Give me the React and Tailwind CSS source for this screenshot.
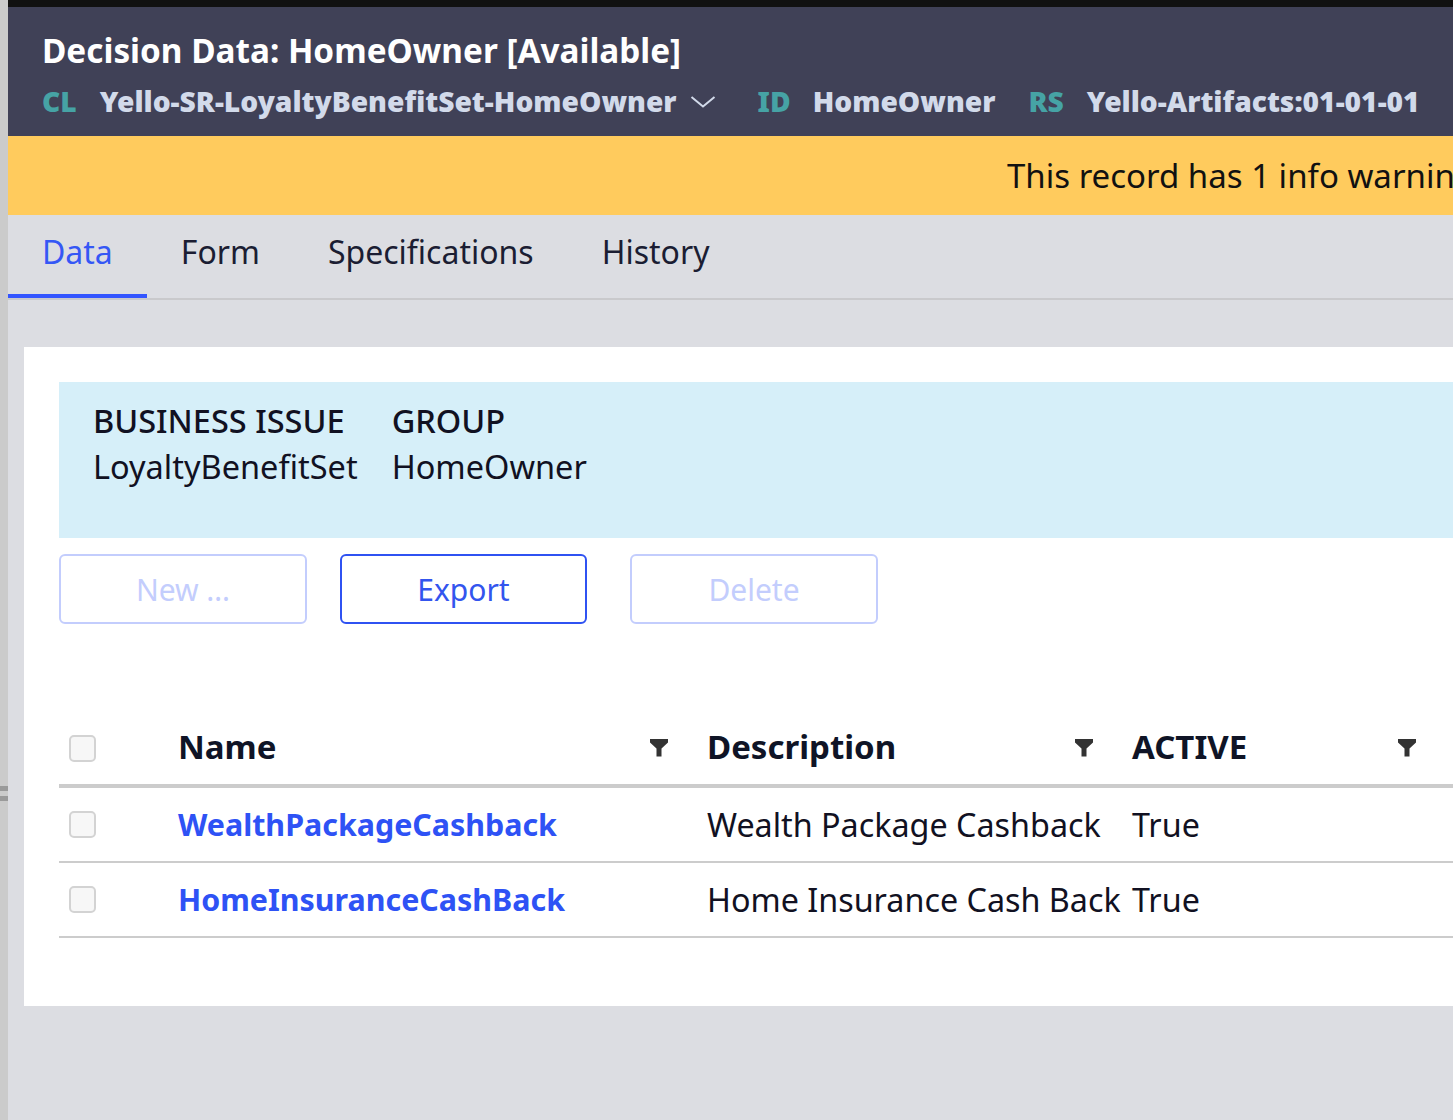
import React from "react";

const Funnel = () => (
  <svg width="18" height="18" viewBox="0 0 18 18" className="shrink-0">
    <path d="M0 0H18V3.5L11.5 9.5V17.5H6.5V9.5L0 3.5Z" fill="#333333" />
  </svg>
);

const Checkbox = () => (
  <div className="w-[27px] h-[27px] rounded-[5px] border-2 border-[#d3d3d3] bg-[#f7f7f7]" />
);

const rows = [
  { name: "WealthPackageCashback", desc: "Wealth Package Cashback", active: "True" },
  { name: "HomeInsuranceCashBack", desc: "Home Insurance Cash Back", active: "True" },
];

const App = () => {
  return (
    <div className="flex w-[1453px] h-[1120px] overflow-hidden font-['Noto_Sans','Open_Sans',sans-serif]">
      {/* left strip */}
      <div className="w-[8px] shrink-0 bg-[#cbcbcb] flex flex-col pt-[786px] gap-[5px]">
        <div className="h-[5px] bg-[#9a9a9a]" />
        <div className="h-[5px] bg-[#9a9a9a]" />
      </div>

      <div className="flex-1 min-w-0 flex flex-col bg-[#dcdde2]">
        <div className="h-[7px] bg-[#111111]" />

        {/* Header */}
        <div className="h-[129px] bg-[#404157] pl-[34px] pt-[23px] overflow-hidden">
          <h1 className="text-[33.3px] leading-[40px] font-bold text-white whitespace-nowrap">
            Decision Data: HomeOwner [Available]
          </h1>
          <div className="mt-[15px] flex items-center text-[28.2px] leading-[32px] font-black whitespace-nowrap">
            <span className="shrink-0 text-[#46a3a5]">CL</span>
            <span className="shrink-0 ml-[23px] text-[#d2daea]">Yello-SR-LoyaltyBenefitSet-HomeOwner</span>
            <svg width="26" height="14" viewBox="0 0 26 14" className="shrink-0 ml-[13px] mt-[2px]">
              <path d="M1.5 2L13 11.5L24.5 2" fill="none" stroke="#d2daea" strokeWidth="2" />
            </svg>
            <span className="shrink-0 ml-[42px] text-[#46a3a5]">ID</span>
            <span className="shrink-0 ml-[22px] text-[#d2daea]">HomeOwner</span>
            <span className="shrink-0 ml-[33px] text-[#46a3a5]">RS</span>
            <span className="shrink-0 ml-[23px] text-[#d2daea]">Yello-Artifacts:01-01-01</span>
          </div>
        </div>

        {/* Warning banner */}
        <div className="h-[79px] bg-[#ffcb5d] flex items-center pl-[999px] overflow-hidden whitespace-nowrap">
          <span className="text-[33px] text-[#111111]">This record has 1 info warning</span>
        </div>

        {/* Tabs */}
        <div className="h-[85px] flex border-b-2 border-[#c9c9cc]">
          {["Data", "Form", "Specifications", "History"].map((t, i) => (
            <div
              key={t}
              className={`px-[34px] flex items-center text-[32px] border-b-4 ${
                i === 0 ? "text-[#3557f5] border-[#3355ff]" : "text-[#1b1d33] border-transparent"
              }`}
            >
              <span className="-mt-[6px]">{t}</span>
            </div>
          ))}
        </div>

        {/* Card */}
        <div className="ml-[16px] mt-[47px] bg-white pl-[35px] pt-[35px] pb-[68px]">
          <div className="h-[156px] bg-[#d6eff9] pl-[34px] pt-[16px] flex gap-[34px] text-[32.5px] leading-[46px] text-[#111122]">
            <div>
              <div className="font-medium">BUSINESS ISSUE</div>
              <div>LoyaltyBenefitSet</div>
            </div>
            <div>
              <div className="font-medium">GROUP</div>
              <div>HomeOwner</div>
            </div>
          </div>

          <div className="mt-[16px] flex text-[30px]">
            <div className="w-[248px] h-[70px] rounded-[6px] border-2 border-[#c3cdfd] text-[#c3cdfd] flex items-center justify-center">
              New …
            </div>
            <div className="ml-[33px] w-[247px] h-[70px] rounded-[6px] border-2 border-[#2f52f2] text-[#3355ee] flex items-center justify-center">
              Export
            </div>
            <div className="ml-[43px] w-[248px] h-[70px] rounded-[6px] border-2 border-[#c3cdfd] text-[#c3cdfd] flex items-center justify-center">
              Delete
            </div>
          </div>

          {/* Table */}
          <div className="mt-[88px] w-[1396px]">
            <div className="grid grid-cols-[119px_529px_425px_323px] h-[76px] border-b-4 border-[#cccccc] items-center text-[33px] font-bold text-[#0f1426]">
              <div className="pl-[10px]">
                <Checkbox />
              </div>
              <div className="flex items-center justify-between pr-[39px]">
                <span className="-mt-[2px]">Name</span>
                <Funnel />
              </div>
              <div className="flex items-center justify-between pr-[39px]">
                <span className="-mt-[2px]">Description</span>
                <Funnel />
              </div>
              <div className="flex items-center justify-between pr-[39px]">
                <span className="-mt-[2px]">ACTIVE</span>
                <Funnel />
              </div>
            </div>
            {rows.map((r) => (
              <div
                key={r.name}
                className="grid grid-cols-[119px_529px_425px_323px] h-[75px] border-b-2 border-[#cccccc] items-center text-[32.3px] text-[#111122]"
              >
                <div className="pl-[10px]">
                  <Checkbox />
                </div>
                <div className="font-bold text-[30.4px] text-[#2e52f5] whitespace-nowrap">{r.name}</div>
                <div className="whitespace-nowrap">{r.desc}</div>
                <div>{r.active}</div>
              </div>
            ))}
          </div>
        </div>
      </div>
    </div>
  );
};

export default App;
